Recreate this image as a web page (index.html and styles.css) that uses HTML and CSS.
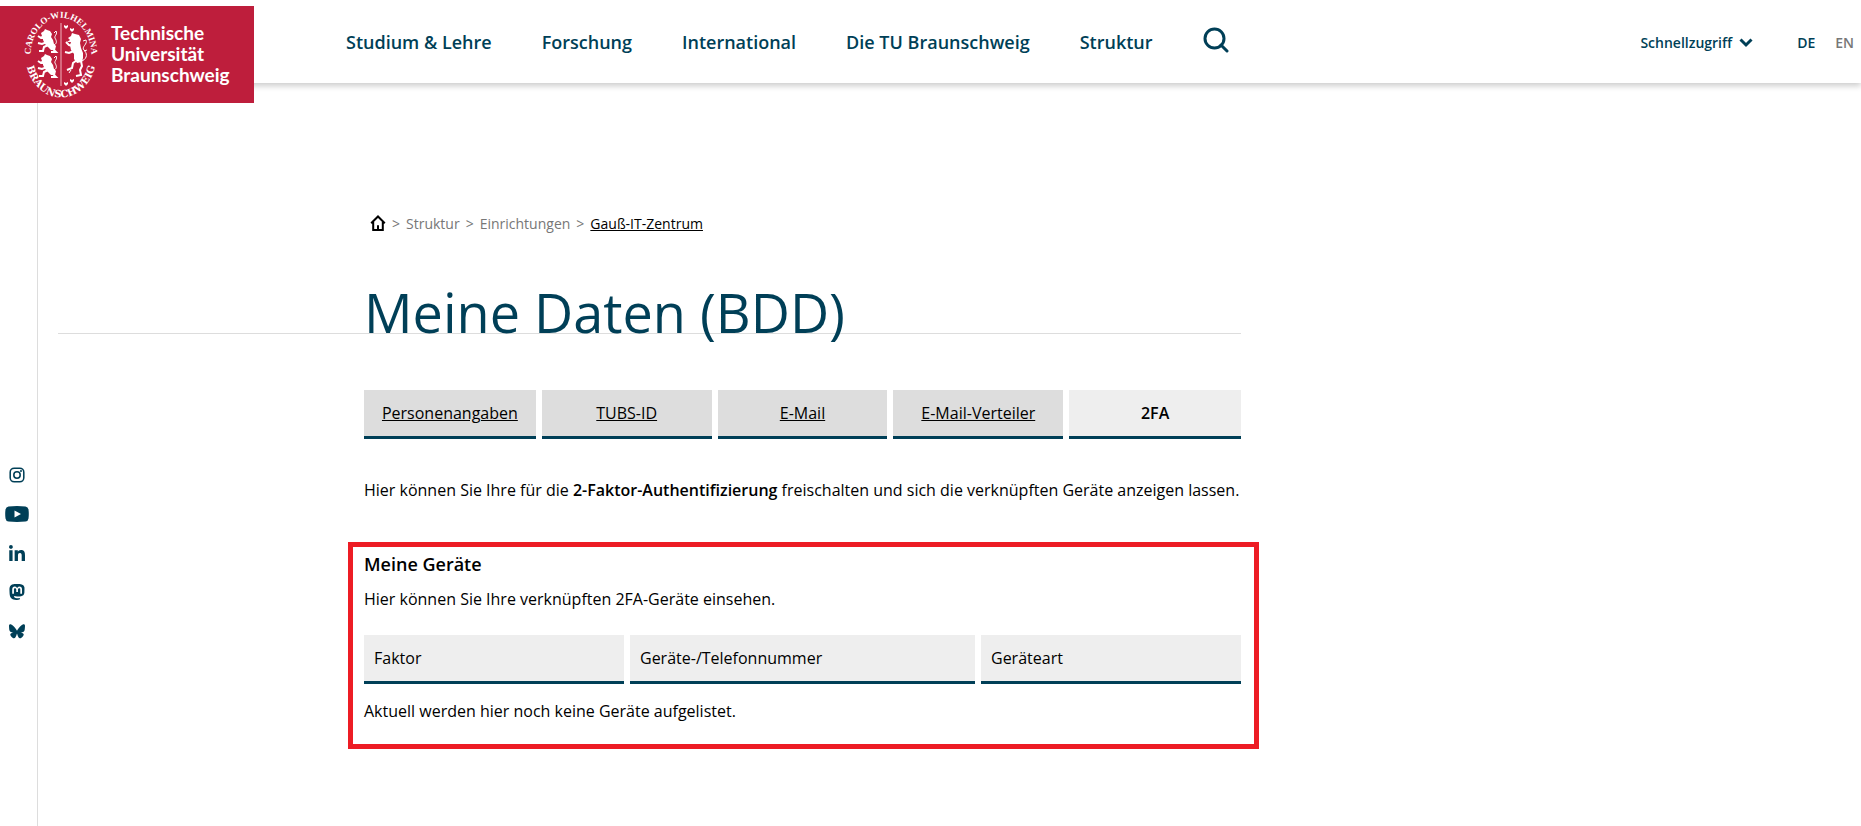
FILE: index.html
```html
<!DOCTYPE html>
<html lang="de">
<head>
<meta charset="utf-8">
<meta name="viewport" content="width=device-width, initial-scale=1">
<title>Meine Daten (BDD)</title>
<link rel="stylesheet" href="styles.css">
</head>
<body>
<header class="header">
  <a class="logo" href="#">
    <svg class="seal" viewBox="0 0 76 90" aria-hidden="true">
      <defs>
        <path id="arc-top" d="M7.800 50A30.500 37 0 1 1 68.200 50"/>
        <path id="arc-bottom" d="M2.500 45A35.500 42.500 0 0 0 73.500 45"/>
      </defs>
      <text class="seal-text"><textPath href="#arc-top" startOffset="50%">CAROLO-WILHELMINA</textPath></text>
      <text class="seal-text seal-text-wide"><textPath href="#arc-bottom" startOffset="50%">BRAUNSCHWEIG</textPath></text>
      <path class="seal-line" d="M38 13V76"/>
      <g id="lion-small">
        <path class="seal-fill" d="M18 23l3-2 1-2 2 1 3 1 2 3-1 3 2 3 1 4 2 2-1 4-4 0-3-3-3-3-2-4 0-2-3-1 2-1z"/>
        <path class="seal-leg" d="M23 28l-5 0-3-2M24 32l-5 2-4-1M25 35l-4 2-1 4-4 0M31 36l-1 3 3 3-5 0"/>
        <path class="seal-tail" d="M31 35c4-2 2-5 1-7s3-4 1-7l-2 2"/>
      </g>
      <use href="#lion-small" transform="translate(0 25)"/>
      <path class="seal-fill" d="M45 28l3-2 1-3 3 1 4 1 2 4-1 4 1 5 2 5 0 5-1 4-5 1-3-4 0-5-3-4-1-5 1-3-4 0 3-2z"/>
      <path class="seal-leg" d="M50 36l-4-1-3-3M51 41l-5 2-4-1M54 50l-4 3-1 5-5 2M58 51l1 5-2 4 1 5-5 1"/>
      <path class="seal-tail" d="M59 51c6-3 5-8 2-11s4-6 2-10l-3 1M48 60l-2 3M61 41l3-1"/>
      <path class="seal-fill" d="M41 15l2 1 2-1 0 2-2 2-2-2zM47 18l2 1 2-1 0 2-2 2-2-2zM41 72l2 1 2-1 0 2-2 2-2-2zM47 69l2 1 2-1 0 2-2 2-2-2z"/>
    </svg>
    <span class="logo-text">Technische<br>Universität<br>Braunschweig</span>
  </a>
  <nav class="nav" aria-label="Hauptnavigation">
    <a href="#">Studium &amp; Lehre</a>
    <a href="#">Forschung</a>
    <a href="#">International</a>
    <a href="#">Die TU Braunschweig</a>
    <a href="#">Struktur</a>
    <button class="search" type="button" aria-label="Suche">
      <svg viewBox="0 0 26 26" width="26" height="26"><circle cx="11.500" cy="11.500" r="9.500"/><path d="M18 18l6 6"/></svg>
    </button>
  </nav>
  <div class="tools">
    <button class="quick" type="button">Schnellzugriff
      <svg viewBox="0 0 14 10" width="14" height="10" aria-hidden="true"><path d="M1.500 1.500L7 7l5.500-5.500"/></svg>
    </button>
    <a class="lang lang-active" href="#">DE</a>
    <a class="lang" href="#">EN</a>
  </div>
</header>
<div class="page">
  <aside class="social">
    <a href="#" aria-label="Instagram"><svg viewBox="0 0 24 24" width="16" height="16"><g fill="none" stroke="currentColor" stroke-width="2.300"><rect x="1.800" y="1.800" width="20.400" height="20.400" rx="6"/><circle cx="12" cy="12" r="4.800"/></g><circle cx="18" cy="6" r="1.500"/></svg></a>
    <a href="#" aria-label="YouTube"><svg viewBox="0 0 24 16" width="24" height="16"><path fill-rule="evenodd" d="M3.500.4Q12-.4 20.500.4 23 .6 23.500 3.500q.6 4.500 0 9-.5 2.900-3 3.100-8.500.8-17 0-2.500-.2-3-3.100-.6-4.500 0-9Q1 .6 3.500.4zM9.500 4.500v7L16 8z"/></svg></a>
    <a href="#" aria-label="LinkedIn"><svg viewBox="0 0 448 448" width="16" height="16"><path d="M100 448H7V149h93zM53.800 108C24 108 0 83.500 0 53.800a53.800 53.800 0 0 1 107.600 0C107.600 83.500 83.500 108 53.800 108zM448 448h-93V302.400c0-34.700-.7-79.200-48.300-79.200-48.300 0-55.700 37.700-55.700 76.700V448h-93V149h89v40.800h1.300c12.400-23.500 42.700-48.300 88-48.300 94 0 111.300 61.900 111.300 142.300V448z"/></svg></a>
    <a href="#" aria-label="Mastodon"><svg viewBox="0 0 24 24" width="16" height="16"><path d="M23.268 5.313c-.35-2.578-2.617-4.610-5.304-5.004C17.510.242 15.792 0 11.813 0h-.030c-3.980 0-4.835.242-5.288.309C3.882.692 1.496 2.518.917 5.127.640 6.412.610 7.837.661 9.143c.074 1.874.088 3.745.26 5.611.118 1.240.325 2.470.62 3.680.55 2.237 2.777 4.098 4.960 4.857 2.336.792 4.849.923 7.256.38.265-.061.527-.132.786-.213.585-.184 1.270-.39 1.774-.753v-1.809a.052.052 0 0 0-.066-.051 20.282 20.282 0 0 1-4.709.545c-2.730 0-3.463-1.284-3.674-1.818a5.593 5.593 0 0 1-.319-1.433.053.053 0 0 1 .066-.054c1.517.363 3.072.546 4.632.546.376 0 .750 0 1.125-.010 1.570-.044 3.224-.124 4.768-.422 2.435-.464 4.753-1.920 4.989-5.604.008-.145.030-1.520.030-1.670.002-.512.167-3.630-.024-5.545zm-3.748 9.195h-2.561V8.290c0-1.309-.550-1.976-1.670-1.976-1.230 0-1.846.79-1.846 2.350v3.403h-2.546V8.663c0-1.560-.617-2.350-1.848-2.350-1.112 0-1.668.668-1.670 1.977v6.218H4.822V8.102c0-1.310.337-2.350 1.011-3.120.696-.770 1.608-1.164 2.740-1.164 1.311 0 2.302.5 2.962 1.498l.638 1.060.638-1.060c.66-.999 1.650-1.498 2.960-1.498 1.130 0 2.043.395 2.740 1.164.675.770 1.012 1.810 1.012 3.120z"/></svg></a>
    <a href="#" aria-label="Bluesky"><svg viewBox="0 0 24 22" width="16" height="15"><path d="M12 9.800C10.900 7.700 8 3.700 5.200 1.700 2.600-.2 1.600.2.900.5.100.8 0 2 0 2.700c0 .7.400 5.700.600 6.500.8 2.700 3.600 3.600 6.200 3.300-3.800.6-7.200 2-2.800 6.900 4.900 5 6.700-1.100 7.600-4.200.1-.2.300-.9.400-1.300.1.400.3 1.100.4 1.300.9 3.100 2.700 9.200 7.600 4.200 4.400-4.900 1-6.300-2.800-6.900 2.600.3 5.400-.6 6.200-3.300.2-.8.600-5.800.6-6.500 0-.7-.1-1.900-.9-2.200-.7-.3-1.700-.7-4.300 1.200C16 3.700 13.100 7.700 12 9.800z"/></svg></a>
  </aside>
  <main class="main">
    <nav class="crumbs" aria-label="Brotkrumen">
      <a class="home" href="#" aria-label="Startseite"><svg viewBox="0 0 16 16" width="16" height="16"><path d="M1.200 8.300L8 1.500l6.800 6.800M3.200 7v7.900h9.600V7"/><path d="M8 10.200v4.500"/></svg></a>
      <span>&gt;</span><a href="#">Struktur</a>
      <span>&gt;</span><a href="#">Einrichtungen</a>
      <span>&gt;</span><a class="current" href="#">Gauß-IT-Zentrum</a>
    </nav>
    <div class="title"><h1>Meine Daten (BDD)</h1></div>
    <nav class="tabs" aria-label="Bereiche">
      <a href="#">Personenangaben</a>
      <a href="#">TUBS-ID</a>
      <a href="#">E-Mail</a>
      <a href="#">E-Mail-Verteiler</a>
      <a class="active" href="#" aria-current="page">2FA</a>
    </nav>
    <p class="intro">Hier können Sie Ihre für die <strong>2-Faktor-Authentifizierung</strong> freischalten und sich die verknüpften Geräte anzeigen lassen.</p>
    <section class="devices">
      <h2>Meine Geräte</h2>
      <p>Hier können Sie Ihre verknüpften 2FA-Geräte einsehen.</p>
      <table class="table">
        <thead><tr><th class="narrow" scope="col">Faktor</th><th scope="col">Geräte-/Telefonnummer</th><th class="narrow" scope="col">Geräteart</th></tr></thead>
      </table>
      <p>Aktuell werden hier noch keine Geräte aufgelistet.</p>
    </section>
  </main>
</div>
</body>
</html>
```
FILE: styles.css
```css
* { box-sizing: border-box; }
body {
  margin: 0;
  min-height: 100vh;
  display: flex;
  flex-direction: column;
  background: #fff;
  color: #000;
  font: 16px/24px "Open Sans", "Noto Sans", sans-serif;
}
a { color: inherit; text-decoration: none; }
button { border: 0; padding: 0; background: none; color: inherit; font: inherit; cursor: pointer; }
h1, h2, p { margin: 0; }

.header {
  position: relative;
  z-index: 1;
  display: flex;
  align-items: center;
  height: 83px;
  background: #fff;
  color: #003f57;
  box-shadow: 0 3px 6px rgba(0, 0, 0, 0.2);
}
.logo {
  align-self: flex-start;
  display: flex;
  align-items: center;
  gap: 12px;
  width: 254px;
  height: 97px;
  margin-top: 6px;
  padding-left: 23px;
  background: #be1e3c;
  color: #fff;
}
.seal { width: 76px; height: 90px; overflow: visible; }
.seal-text { font: bold 9px "Liberation Serif", serif; fill: #fff; text-anchor: middle; }
.seal-text-wide { font: bold 10px "DejaVu Serif", serif; }
.seal-fill { fill: #fff; }
.seal-line { stroke: #f0b4be; stroke-width: 1; }
.seal-leg { fill: none; stroke: #fff; stroke-width: 2; }
.seal-tail { fill: none; stroke: #fff; stroke-width: 1; }
.logo-text { padding-bottom: 2px; font: bold 19px/21px Lato, sans-serif; }
.nav {
  display: flex;
  align-items: center;
  gap: 50px;
  margin-left: 92px;
  font-size: 18px;
  font-weight: 600;
}
.search { display: flex; padding-bottom: 4px; }
.search svg { fill: none; stroke: currentColor; stroke-width: 3; stroke-linecap: round; }
.tools {
  display: flex;
  align-items: center;
  gap: 20px;
  margin-left: auto;
  padding: 2px 7px 0 0;
  font-size: 14px;
  font-weight: 600;
}
.quick { display: flex; align-items: center; gap: 7px; margin-right: 24px; }
.quick svg { fill: none; stroke: currentColor; stroke-width: 3; }
.lang { color: #777; }
.lang-active { color: #003f57; }

.page { flex: 1; display: flex; }
.social {
  width: 38px;
  padding: 380px 4px 0 0;
  border-right: 1px solid #ddd;
  display: flex;
  flex-direction: column;
  align-items: center;
  gap: 15px;
  color: #003f57;
}
.social a { display: flex; align-items: center; height: 24px; }
.social svg { fill: currentColor; }

.main { width: 1203px; padding: 129px 0 0 326px; }
.crumbs { display: flex; align-items: center; gap: 6px; padding-left: 6px; color: #777; font-size: 14px; }
.home { display: flex; padding-bottom: 2px; color: #000; }
.home svg { fill: none; stroke: currentColor; stroke-width: 2; }
.current { color: #000; text-decoration: underline; }
.title { margin: 55px 0 0 -306px; padding-left: 306px; border-bottom: 1px solid #ddd; }
h1 { color: #003f57; font-size: 54px; line-height: 42px; font-weight: 400; }
.tabs {
  display: grid;
  grid-template-columns: 172fr 170fr 170fr 170fr 172fr;
  gap: 6px;
  margin-top: 56px;
}
.tabs a {
  padding: 11px 0;
  border-bottom: 3px solid #003f57;
  background: #ddd;
  text-align: center;
  text-decoration: underline;
}
.tabs .active { background: #eee; font-weight: 600; text-decoration: none; }
.intro { margin-top: 39px; white-space: nowrap; }
strong { font-weight: 600; }
.devices { margin: 40px -18px 0 -16px; padding: 5px 13px 21px 11px; border: 5px solid #ed1c24; }
h2 { font-size: 18px; line-height: 24px; font-weight: 600; margin-bottom: 11px; }
.table {
  width: calc(100% + 12px);
  margin: 24px -6px 15px;
  border-collapse: separate;
  border-spacing: 6px 0;
  table-layout: fixed;
}
.table th {
  padding: 11px 10px;
  border-bottom: 3px solid #003f57;
  background: #eee;
  font-weight: 400;
  text-align: left;
}
.narrow { width: 260px; }
```
